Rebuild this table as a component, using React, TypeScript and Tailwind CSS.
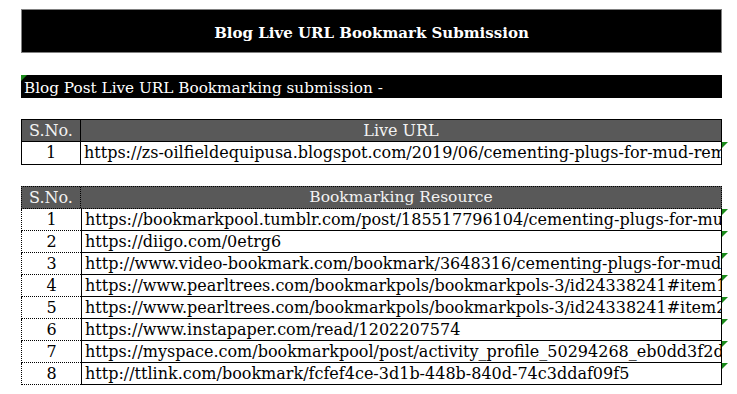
import React from "react";

const liveUrl =
  "https://zs-oilfieldequipusa.blogspot.com/2019/06/cementing-plugs-for-mud-removal.html";

const resources = [
  "https://bookmarkpool.tumblr.com/post/185517796104/cementing-plugs-for-mud-removal",
  "https://diigo.com/0etrg6",
  "http://www.video-bookmark.com/bookmark/3648316/cementing-plugs-for-mud-removal/",
  "https://www.pearltrees.com/bookmarkpols/bookmarkpols-3/id24338241#item1",
  "https://www.pearltrees.com/bookmarkpols/bookmarkpols-3/id24338241#item2",
  "https://www.instapaper.com/read/1202207574",
  "https://myspace.com/bookmarkpool/post/activity_profile_50294268_eb0dd3f2d",
  "http://ttlink.com/bookmark/fcfef4ce-3d1b-448b-840d-74c3ddaf09f5",
];

function Tri({ className }: { className: string }) {
  return (
    <svg width="6" height="6" viewBox="0 0 6 6" className={className}>
      <polygon points="0,0 6,0 0,6" fill="#1a8a1a" />
    </svg>
  );
}

export default function App() {
  return (
    <div
      className="w-[737px] h-[394px] bg-white overflow-hidden pt-[9px] text-black"
      style={{ fontFamily: '"DejaVu Serif", serif' }}
    >
      {/* Title */}
      <div className="ml-[21px] w-[701px] h-[44px] bg-black border border-[#808080] flex items-center justify-center">
        <span className="text-white font-bold text-[15px] leading-none pt-[5px]">
          Blog Live URL Bookmark Submission
        </span>
      </div>

      {/* Subtitle */}
      <div className="relative ml-[21px] mt-[22px] w-[701px] h-[23px] bg-black flex items-center">
        <Tri className="absolute left-0 top-0" />
        <span className="text-white text-[15.25px] leading-none pl-[3px] pt-[4px]">
          Blog Post Live URL Bookmarking submission -
        </span>
      </div>

      {/* Table 1 */}
      <div className="ml-[21px] mt-[21px] w-[701px]">
        <div className="flex h-[23px] border border-black bg-[#595959] text-[#f2f2f2] text-[16px]">
          <div className="w-[59px] shrink-0 border-r border-black flex items-center justify-center leading-none pt-[1px]">
            S.No.
          </div>
          <div className="flex-1 flex items-center justify-center leading-none pt-[1px]">
            Live URL
          </div>
        </div>
        <div className="relative flex h-[23px] border border-t-0 border-black text-[16px]">
          <div className="w-[59px] shrink-0 border-r border-black flex items-center justify-center leading-none">
            1
          </div>
          <div className="flex-1 overflow-hidden whitespace-nowrap flex items-center pl-[3px] leading-none">
            {liveUrl}
          </div>
          <Tri className="absolute left-[700px] top-0" />
        </div>
      </div>

      {/* Table 2 */}
      <div className="ml-[21px] mt-[21px] w-[701px] text-[16px]">
        <div className="flex h-[23px] border border-dotted border-black bg-[#595959] text-[#f2f2f2]">
          <div className="w-[59px] shrink-0 border-r border-dotted border-black flex items-center justify-center leading-none pt-[1px]">
            S.No.
          </div>
          <div className="flex-1 flex items-center justify-center leading-none pt-[1px] text-[15.5px]">
            Bookmarking Resource
          </div>
        </div>
        {resources.map((u, i) => (
          <div key={i} className="relative flex h-[22px]">
            <div className="w-[60px] shrink-0 border-l border-b border-dotted border-black flex items-center justify-center leading-none">
              {i + 1}
            </div>
            <div className="flex-1 min-w-0 border-l border-r border-b border-black overflow-hidden whitespace-nowrap flex items-center pl-[3px] leading-none">
              {u}
            </div>
            <Tri className="absolute left-[701px] top-0" />
          </div>
        ))}
      </div>
    </div>
  );
}
